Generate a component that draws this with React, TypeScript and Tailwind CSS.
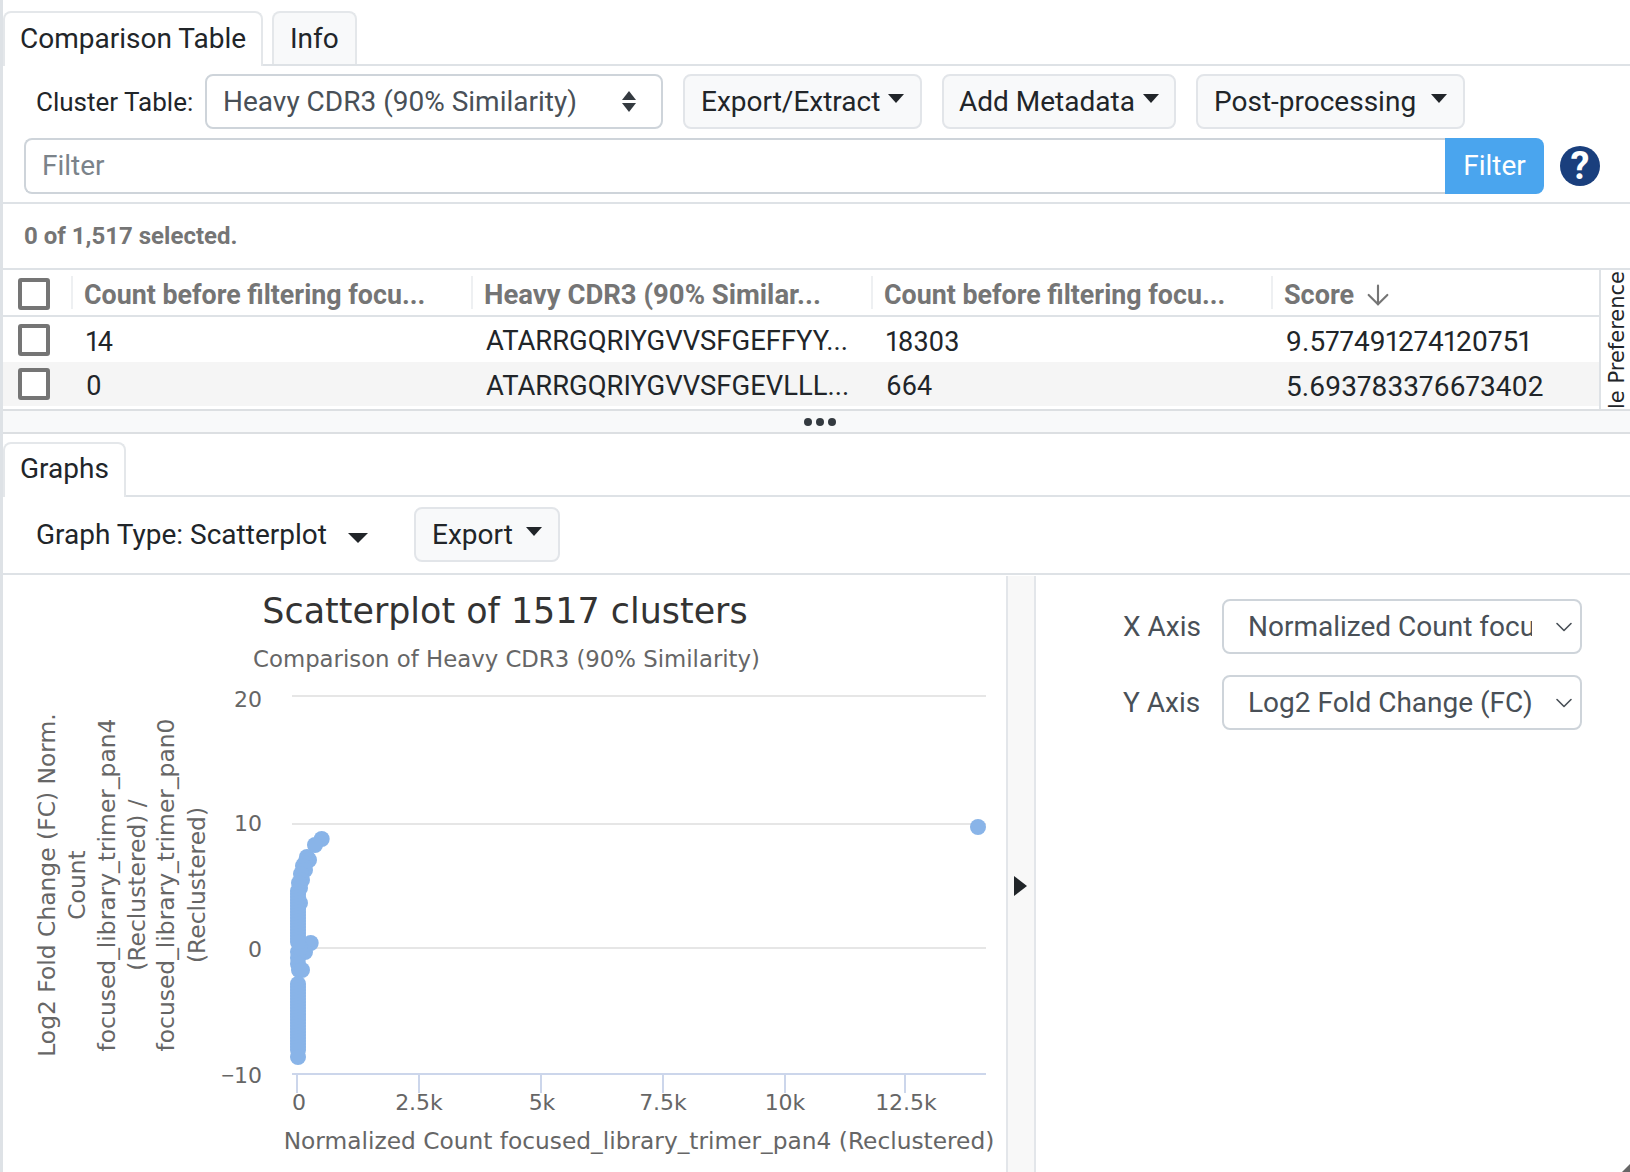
import React from "react";
import { ArrowDown, ChevronDown } from "lucide-react";

const FONT = "font-['Roboto','Liberation_Sans',sans-serif]";

function Caret({ className = "" }: { className?: string }) {
  return (
    <span
      className={`inline-block w-0 h-0 border-x-[8px] border-x-transparent border-t-[9px] border-t-[#212529] ${className}`}
    />
  );
}

function DropButton({ label, className = "" }: { label: string; className?: string }) {
  return (
    <button
      className={`h-[55px] flex items-center bg-[#f8f9fa] border-2 border-[#e2e5e9] rounded-[8px] text-[28px] text-[#212529] ${className}`}
    >
      {label}
      <Caret className="mb-[6px]" />
    </button>
  );
}

function Checkbox() {
  return (
    <span className="block w-[32px] h-[32px] border-[4px] border-[#757575] rounded-[3px] bg-white" />
  );
}

function HeaderCell({ text, size }: { text: string; size: string }) {
  return (
    <div className="w-[400px] flex items-center h-[33px] pl-[11px] pt-[5px] border-l-2 border-[#eef0f2]">
      <span className={`${size} font-bold text-[#757575] whitespace-nowrap`}>{text}</span>
    </div>
  );
}

const ROWS = [
  { count: "14", seq: "ATARRGQRIYGVVSFGEFFYY...", total: "18303", score: "9.577491274120751", bg: "bg-white", h: "h-[45px]" },
  { count: "0", seq: "ATARRGQRIYGVVSFGEVLLL...", total: "664", score: "5.693783376673402", bg: "bg-[#f5f5f5]", h: "h-[44px]" },
];

// cluster of points along the y axis, taken from the picture
const POINTS: [number, number][] = [
  [321.7, 839], [315, 845], [307, 857], [309, 860], [305, 863], [303, 866], [305, 870], [301, 874], [302, 880], [299, 883], [300, 888],
  [298, 891], [300, 903], [310.7, 943], [305, 952], [298, 952], [298, 958], [300, 948],
  [298, 964], [299, 970], [302, 970], [978, 827],
];
for (let y = 894; y <= 944; y += 3) POINTS.push([298, y]);
for (let y = 984; y <= 1052; y += 3) POINTS.push([298, y]);
POINTS.push([298, 1057]);

function ScatterChart() {
  // the svg starts at x=3, y=575 of the page
  return (
    <svg width="1003" height="597" viewBox="3 575 1003 597" className="block" style={{ fontFamily: "'DejaVu Sans', sans-serif" }}>
      <text x="505" y="623" textAnchor="middle" fontSize="34.9" fill="#333333">
        Scatterplot of 1517 clusters
      </text>
      <text x="506.5" y="667" textAnchor="middle" fontSize="22.8" fill="#666666">
        Comparison of Heavy CDR3 (90% Similarity)
      </text>

      {[696, 824, 948].map((y) => (
        <line key={y} x1="292" x2="986" y1={y} y2={y} stroke="#e6e6e6" strokeWidth="2" />
      ))}
      <line x1="292" x2="986" y1="1074" y2="1074" stroke="#ccd6eb" strokeWidth="2" />
      {[297, 419, 541, 663, 785, 905].map((x) => (
        <line key={x} x1={x} x2={x} y1="1074" y2="1093" stroke="#ccd6eb" strokeWidth="2" />
      ))}

      <text x="262" y="707" textAnchor="end" fontSize="22" fill="#666666">20</text>
      <text x="262" y="831" textAnchor="end" fontSize="22" fill="#666666">10</text>
      <text x="262" y="957" textAnchor="end" fontSize="22" fill="#666666">0</text>
      <text x="262" y="1083" textAnchor="end" fontSize="22" fill="#666666">
        <tspan fontFamily="'Liberation Sans', sans-serif">−</tspan>10
      </text>
      {[
        ["0", 299],
        ["2.5k", 419],
        ["5k", 542],
        ["7.5k", 663],
        ["10k", 785],
        ["12.5k", 906],
      ].map(([label, x]) => (
        <text key={label} x={x} y="1110" textAnchor="middle" fontSize="22" fill="#666666">
          {label}
        </text>
      ))}
      <text x="639" y="1149" textAnchor="middle" fontSize="23.3" fill="#666666">
        Normalized Count focused_library_trimer_pan4 (Reclustered)
      </text>

      <g transform="translate(0 885)" fontSize="23.4" fill="#666666" textAnchor="middle">
        {[
          ["Log2 Fold Change (FC) Norm.", 55],
          ["Count", 85],
          ["focused_library_trimer_pan4", 115],
          ["(Reclustered) /", 145],
          ["focused_library_trimer_pan0", 174],
          ["(Reclustered)", 205],
        ].map(([line, x]) => (
          <text key={line} transform={`translate(${x} 0) rotate(-90)`}>
            {line}
          </text>
        ))}
      </g>

      {POINTS.map(([x, y], i) => (
        <circle key={i} cx={x} cy={y} r="8" fill="#89b4e8" />
      ))}
    </svg>
  );
}

export default function App() {
  return (
    <div className={`${FONT} relative w-[1630px] h-[1172px] overflow-hidden bg-white border-l-[3px] border-[#dee2e6] text-[#212529]`}>
      {/* top tabs */}
      <div className="h-[66px] pt-[11px] flex items-end gap-[9px] border-b-2 border-[#dee2e6] pr-0">
        <div className="h-[55px] -mb-[2px] w-[260px] pl-[15px] pb-[2px] flex items-center bg-white border-2 border-b-0 border-[#e4e7ea] rounded-t-[8px] text-[28px]">
          Comparison Table
        </div>
        <div className="h-[53px] w-[85px] pl-[16px] flex items-center bg-[#f8f9fa] border-2 border-b-0 border-[#e4e7ea] rounded-t-[8px] text-[28px]">
          Info
        </div>
      </div>

      {/* toolbar */}
      <div className="h-[72px] flex items-start pt-[8px] pl-[33px]">
        <span className="h-[55px] leading-[57px] w-[169px] text-[26px]">Cluster Table:</span>
        <div className="h-[55px] w-[458px] flex items-center justify-between pl-[16px] pr-[25px] border-2 border-[#ced4da] rounded-[8px] text-[28px] text-[#495057]">
          <span>Heavy CDR3 (90% Similarity)</span>
          <span className="flex flex-col gap-[3px]">
            <span className="block w-0 h-0 border-x-[7px] border-x-transparent border-b-[9px] border-b-[#343a40]" />
            <span className="block w-0 h-0 border-x-[7px] border-x-transparent border-t-[9px] border-t-[#343a40]" />
          </span>
        </div>
        <DropButton label="Export/Extract" className="ml-[20px] w-[239px] pl-[16px] gap-[8px]" />
        <DropButton label="Add Metadata" className="ml-[20px] w-[234px] pl-[15px] gap-[8px]" />
        <DropButton label="Post-processing" className="ml-[20px] w-[269px] pl-[16px] gap-[15px]" />
      </div>

      {/* filter */}
      <div className="h-[66px] flex items-start pl-[21px] border-b-2 border-[#dee2e6]">
        <div className="h-[56px] w-[1421px] flex items-center pl-[16px] border-2 border-r-0 border-[#ced4da] rounded-l-[8px] text-[28px] text-[#7b838a]">
          Filter
        </div>
        <div className="h-[56px] w-[99px] flex items-center justify-center bg-[#4aa5ee] rounded-r-[8px] text-[28px] text-white">
          Filter
        </div>
        <div className="ml-[16px] mt-[8px] w-[40px] h-[40px] rounded-full bg-[#1a3f7d] flex items-center justify-center text-white text-[38px] font-bold">
          ?
        </div>
      </div>

      {/* selection count */}
      <div className="h-[66px] flex items-center pl-[21px] border-b-2 border-[#dee2e6] text-[24px] font-bold text-[#757575]">
        0 of 1,517 selected.
      </div>

      {/* table + side tab */}
      <div className="h-[139px] flex">
        <div className="w-[1596px]">
          <div className="h-[47px] flex items-center border-b-2 border-[#dee2e6]">
            <div className="w-[68px] pl-[15px] pt-[3px]">
              <Checkbox />
            </div>
            <HeaderCell text="Count before filtering focu..." size="text-[26.8px]" />
            <HeaderCell text="Heavy CDR3 (90% Similar..." size="text-[27.5px]" />
            <HeaderCell text="Count before filtering focu..." size="text-[26.8px]" />
            <div className="flex items-center h-[33px] pl-[11px] pt-[5px] border-l-2 border-[#eef0f2] gap-[8px]">
              <span className="text-[27px] font-bold text-[#757575]">Score</span>
              <ArrowDown size={32} strokeWidth={1.6} className="text-[#757575]" />
            </div>
          </div>
          {ROWS.map((row) => (
            <div key={row.count} className={`${row.h} flex items-center ${row.bg}`}>
              <div className="w-[68px] pl-[15px]">
                <Checkbox />
              </div>
              <div className="w-[400px] pl-[15px] pt-[5px] text-[27px] proportional-nums">{row.count}</div>
              <div className="w-[400px] pl-[15px] pt-[5px] text-[27.4px] whitespace-nowrap">{row.seq}</div>
              <div className="w-[400px] pl-[15px] pt-[5px] text-[27px] proportional-nums">{row.total}</div>
              <div className="pl-[15px] pt-[5px] text-[28px] proportional-nums">{row.score}</div>
            </div>
          ))}
        </div>
        <div className="flex-1 border-l-2 border-[#dee2e6] overflow-hidden flex items-start">
          <span className="ml-[1px] h-[139px] [writing-mode:vertical-rl] rotate-180 whitespace-nowrap text-[21px] font-['DejaVu_Sans',sans-serif] text-[#212529]">
            le Preference
          </span>
        </div>
      </div>

      {/* resizer */}
      <div className="h-[25px] flex items-center justify-center gap-[4px] pl-[7px] bg-[#f8f9fa] border-y-2 border-[#dcdfe2]">
        <span className="w-[8px] h-[8px] rounded-full bg-[#343a40]" />
        <span className="w-[8px] h-[8px] rounded-full bg-[#343a40]" />
        <span className="w-[8px] h-[8px] rounded-full bg-[#343a40]" />
      </div>

      {/* graph tabs */}
      <div className="h-[63px] pt-[8px] flex items-end border-b-2 border-[#dee2e6]">
        <div className="h-[55px] -mb-[2px] w-[123px] pl-[15px] pb-[4px] flex items-center bg-white border-2 border-b-0 border-[#e4e7ea] rounded-t-[8px] text-[28px]">
          Graphs
        </div>
      </div>

      {/* graph toolbar */}
      <div className="h-[78px] flex items-start pt-[10px] pl-[33px] border-b-2 border-[#dee2e6]">
        <span className="h-[55px] w-[345px] flex items-center text-[28px] gap-[21px]">
          Graph Type: Scatterplot
          <span className="inline-block mt-[6px] w-0 h-0 border-x-[10px] border-x-transparent border-t-[10px] border-t-[#212529]" />
        </span>
        <DropButton label="Export" className="ml-[33px] w-[146px] pl-[16px] gap-[13px]" />
      </div>

      {/* graph area */}
      <div className="flex h-[598px]">
        <div className="w-[1003px] h-[597px] overflow-hidden">
          <ScatterChart />
        </div>
        <div className="w-[30px] mt-[1px] bg-[#f8f8f8] border-x-[2px] border-[#e3e6ea] flex items-start pt-[300px] pl-[6px]">
          <span className="block w-0 h-0 border-y-[10px] border-y-transparent border-l-[13px] border-l-[#212529]" />
        </div>
        <div className="flex-1 pt-[24px] pl-[87px] text-[#495057]">
          <div className="flex items-center h-[55px]">
            <span className="w-[99px] text-[28px]">X Axis</span>
            <div className="relative w-[360px] h-[55px] flex items-center pl-[24px] border-2 border-[#ced4da] rounded-[8px] text-[28px] overflow-hidden">
              <span className="w-[284px] overflow-hidden whitespace-nowrap">Normalized Count focused_library</span>
              <ChevronDown size={28} strokeWidth={1.4} className="absolute right-[2px] top-[12px]" />
            </div>
          </div>
          <div className="flex items-center h-[55px] mt-[21px]">
            <span className="w-[99px] text-[28px]">Y Axis</span>
            <div className="relative w-[360px] h-[55px] flex items-center pl-[24px] border-2 border-[#ced4da] rounded-[8px] text-[28px] overflow-hidden">
              <span className="w-[284px] overflow-hidden whitespace-nowrap">Log2 Fold Change (FC)</span>
              <ChevronDown size={28} strokeWidth={1.4} className="absolute right-[2px] top-[12px]" />
            </div>
          </div>
        </div>
      </div>

      {/* window resize grip in the corner */}
      <svg width="8" height="8" className="absolute bottom-0 right-0">
        <polygon points="8,0 8,8 0,8" fill="#666666" />
      </svg>
    </div>
  );
}
